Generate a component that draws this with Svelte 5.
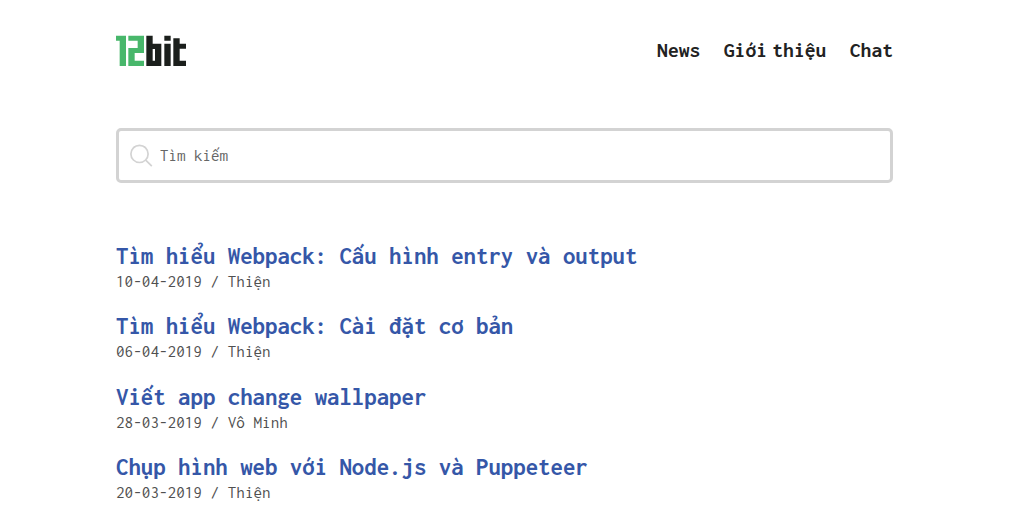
<script>
  const links = ['News', 'Giới thiệu', 'Chat'];
  const posts = [
    { title: 'Tìm hiểu Webpack: Cấu hình entry và output', date: '10-04-2019', author: 'Thiện' },
    { title: 'Tìm hiểu Webpack: Cài đặt cơ bản', date: '06-04-2019', author: 'Thiện' },
    { title: 'Viết app change wallpaper', date: '28-03-2019', author: 'Vô Minh' },
    { title: 'Chụp hình web với Node.js và Puppeteer', date: '20-03-2019', author: 'Thiện' }
  ];
</script>

<div class="page">
  <header>
    <a class="logo" href="#home" aria-label="12bit">
      <svg width="70" height="31" viewBox="0 0 210 93">
        <path fill="#48b76b" d="M0 2H30V93H11V17H0ZM37 2H84V54H56V77H84V93H37V39H65V17H37Z" />
        <path fill="#1b1f1c" fill-rule="evenodd" d="M91 2H110V26H136V93H91ZM110 42V77H117V42ZM145 2H164V17H145ZM145 26H164V93H145ZM172 10H191V26H210V41H191V77H210V93H172Z" />
      </svg>
    </a>
    <nav>
      {#each links as link}<a href="#nav">{link}</a>{/each}
    </nav>
  </header>
  <label class="search">
    <svg width="24" height="24" viewBox="0 0 24 24" fill="none" stroke="#d3d3d3" stroke-width="1.7">
      <circle cx="9.5" cy="9.9" r="8.6" />
      <path d="M15.7 16.1L21.8 22.1" />
    </svg>
    <input type="text" placeholder="Tìm kiếm" />
  </label>
  <main>
    {#each posts as post}
      <article>
        <h2><a href="#post">{post.title}</a></h2>
        <p>{post.date} / {post.author}</p>
      </article>
    {/each}
  </main>
</div>

<style>
  :global(body) { background: #fff; overflow: hidden; }
  .page {
    width: 777px;
    height: 512px;
    overflow: hidden;
    margin-left: 116px;
    font-family: Inconsolata, "DejaVu Sans Mono", monospace;
  }
  a { color: inherit; text-decoration: none; }
  header { display: flex; justify-content: space-between; align-items: center; height: 101px; }
  .logo, .logo svg { display: block; }
  nav { display: flex; gap: 23.5px; padding-bottom: 2px; color: #222; font-size: 21.6px; font-weight: 700; line-height: 24px; word-spacing: -5.5px; }
  .search {
    display: flex;
    align-items: center;
    box-sizing: border-box;
    height: 55px;
    margin-top: 27px;
    padding-left: 11px;
    gap: 6px;
    border: 3px solid #d3d3d3;
    border-radius: 5px;
  }
  input {
    flex: 1;
    min-width: 0;
    border: 0;
    outline: 0;
    padding: 0 0 1px;
    background: transparent;
    font-family: inherit;
    font-size: 17px;
    line-height: 20px;
  }
  input::placeholder { color: #666; opacity: 1; }
  main { padding-top: 58px; }
  article { height: 70.3px; }
  h2 { margin: 0; color: #3557a8; font-size: 24.83px; font-weight: 700; line-height: 31px; white-space: nowrap; }
  p { margin: 0; color: #505050; font-size: 17.2px; line-height: 19px; }
</style>
